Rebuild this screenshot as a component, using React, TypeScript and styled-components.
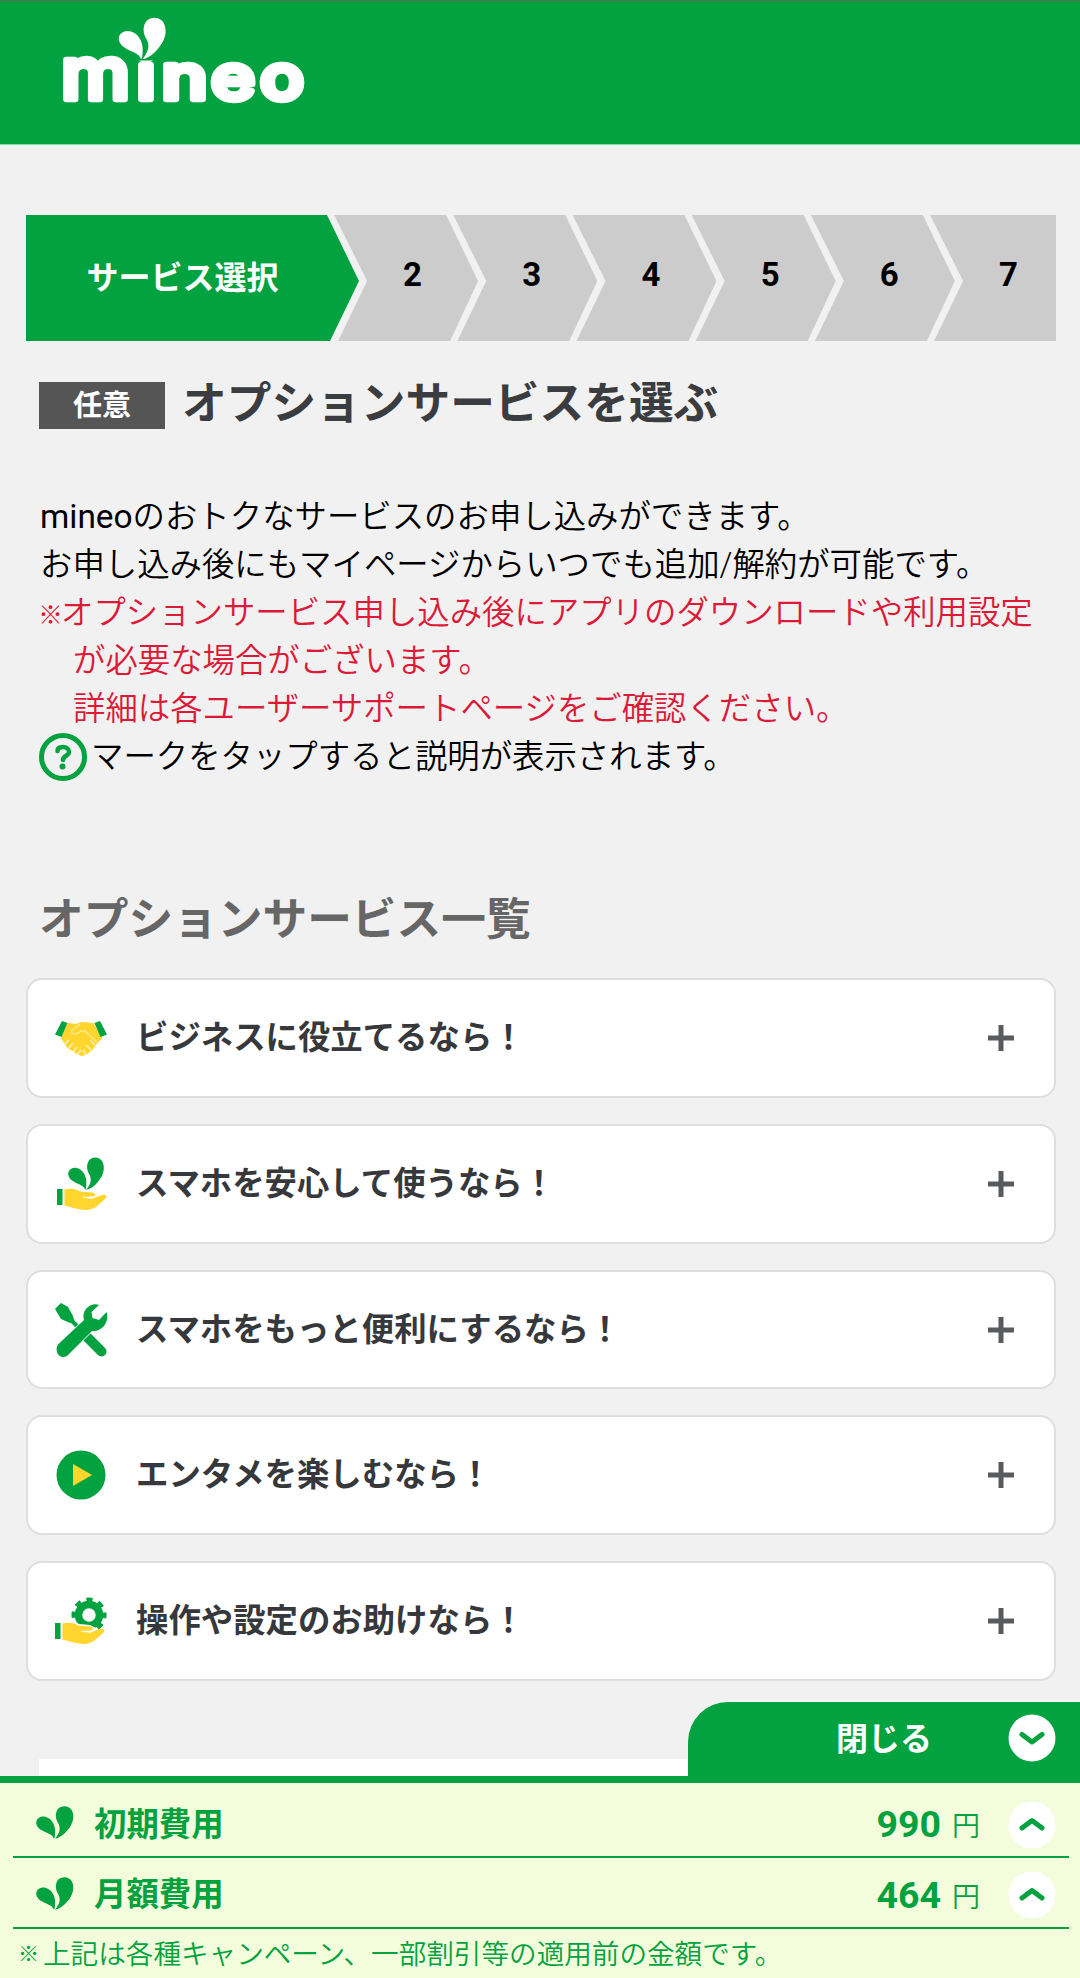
import React from "react";
import styled, { createGlobalStyle } from "styled-components";

const GREEN = "#02a240";
const YELLOW = "#ffd52e";

const GlobalStyle = createGlobalStyle`
  *, *::before, *::after { box-sizing: border-box; }
  body {
    margin: 0;
    background: #f1f1f1;
    font-family: Roboto, "Noto Sans CJK JP", sans-serif;
    color: #000;
  }
  h1, h2, p, ol, ul { margin: 0; padding: 0; }
  svg { display: block; flex: none; overflow: visible; }
`;

const Page = styled.div`
  position: relative;
  width: 1080px;
  height: 1978px;
  overflow: hidden;
  background: #f1f1f1;
`;

const Header = styled.header`
  height: 145px;
  padding: 13px 0 0 60px;
  background: ${GREEN};
  border-top: 1px solid #5f6a5f;
  border-bottom: 1px solid #7be0a4;
`;

const Main = styled.main`
  padding: 70px 24px 0 26px;
`;

const Steps = styled.ol`
  display: flex;
  height: 126px;
  list-style: none;
`;

const CurrentStep = styled.li`
  display: flex;
  align-items: center;
  justify-content: center;
  width: 333px;
  padding: 0 20px 6px 0;
  background: ${GREEN};
  color: #fff;
  font-size: 32px;
  font-weight: 700;
  clip-path: polygon(0 0, 301px 0, 333px 66px, 304px 100%, 0 100%);
`;

const Step = styled.li<{ $last?: boolean }>`
  display: flex;
  align-items: center;
  width: ${(p) => (p.$last ? 126 : 144)}px;
  margin-left: -24.8px;
  padding: 0 0 7px 69px;
  background: #ccc;
  font-size: 33px;
  font-weight: 700;
  clip-path: ${(p) =>
    p.$last
      ? "polygon(0 0, 100% 0, 100% 100%, 4px 100%, 33px 66px)"
      : "polygon(0 0, 112px 0, 144px 66px, 116px 100%, 4px 100%, 33px 66px)"};
`;

const TitleRow = styled.div`
  display: flex;
  align-items: center;
  gap: 17px;
  height: 50px;
  margin: 39px 0 0 13px;
`;

const Badge = styled.span`
  display: flex;
  align-items: center;
  justify-content: center;
  width: 126px;
  height: 47px;
  padding-top: 3px;
  background: #555;
  color: #fff;
  font-size: 29px;
  font-weight: 700;
  line-height: 1;
`;

const Title = styled.h1`
  margin-top: -2px;
  color: #3b3c40;
  font-size: 44.7px;
  line-height: 50px;
  font-weight: 700;
  white-space: nowrap;
`;

const Lead = styled.div`
  margin: 63px 0 0 14px;
  font-size: 32.4px;
  line-height: 48px;
  font-weight: 400;
  white-space: nowrap;
`;

const Line = styled.p<{ $alert?: boolean; $indent?: boolean }>`
  display: flex;
  align-items: center;
  height: 48px;
  padding-left: ${(p) => (p.$indent ? 33 : 0)}px;
  color: ${(p) => (p.$alert ? "#dc1a37" : "#000")};
  font-family: Roboto, "Noto Sans CJK JP DemiLight", "Noto Sans CJK JP", sans-serif;
  font-weight: 350;
`;

const Latin = styled.span`
  font-size: 33.4px;
  font-weight: 400;
`;

const Mark = styled.span<{ $w: number }>`
  display: inline-flex;
  justify-content: center;
  width: ${(p) => p.$w}px;
  font-family: "Noto Sans CJK JP", sans-serif;
  font-size: 0.76em;
  font-weight: 700;
`;

const HelpLine = styled(Line)`
  gap: 4px;
  margin-left: -1px;
`;

const SectionTitle = styled.h2`
  margin: 109px 0 0 13px;
  color: #666;
  font-size: 44.7px;
  line-height: 60px;
  font-weight: 700;
`;

const Cards = styled.ul`
  display: flex;
  flex-direction: column;
  gap: 26px;
  margin-top: 28.4px;
  list-style: none;
`;

const Card = styled.li`
  display: flex;
  align-items: center;
  height: 119.7px;
  padding: 0 40px 0 27px;
  border: 2px solid #dedede;
  border-radius: 16px;
  background: #fff;
`;

const CardLabel = styled.span`
  flex: 1;
  margin: -7px 0 0 29px;
  color: #36383b;
  font-size: 32.4px;
  font-weight: 700;
  white-space: nowrap;
`;

const NextPanel = styled.div`
  height: 100px;
  margin: 78px 14px 0 13px;
  background: #fff;
`;

const Dock = styled.footer`
  position: absolute;
  left: 0;
  right: 0;
  bottom: 0;
  height: 202px;
  padding: 0 11px 0 13px;
  border-top: 7px solid ${GREEN};
  background: #f3fddb;
  color: ${GREEN};
`;

const CloseTab = styled.div`
  position: absolute;
  right: 0;
  top: -81px;
  display: flex;
  align-items: center;
  justify-content: flex-end;
  gap: 76px;
  width: 392px;
  height: 81px;
  padding: 0 24px 9px 0;
  border-top-left-radius: 40px;
  background: ${GREEN};
  color: #fff;
`;

const CloseLabel = styled.span`
  margin-top: -4px;
  font-size: 32px;
  font-weight: 700;
`;

const FeeRow = styled.div<{ $h: number }>`
  display: flex;
  align-items: center;
  height: ${(p) => p.$h}px;
  padding: ${(p) => (p.$h > 72 ? "6px" : "1px")} 13px 0 23px;
  border-bottom: 2px solid ${GREEN};
`;

const FeeName = styled.span`
  flex: 1;
  margin: -3px 0 0 20px;
  font-size: 32.4px;
  font-weight: 700;
`;

const Amount = styled.span`
  margin-top: 3px;
  font-size: 37.5px;
  font-weight: 700;
`;

const Yen = styled.span`
  margin: 3px 28px 0 11px;
  font-size: 28px;
  font-family: "Noto Sans CJK JP DemiLight", "Noto Sans CJK JP", sans-serif;
  font-weight: 350;
`;

const Toggle = styled.span`
  margin-top: 4px;
`;

const Note = styled.p`
  display: flex;
  align-items: center;
  height: 46px;
  padding-left: 1px;
  font-family: "Noto Sans CJK JP DemiLight", "Noto Sans CJK JP", sans-serif;
  font-size: 27.6px;
  font-weight: 350;
  white-space: nowrap;
`;

const LEAF_LEFT =
  "M141 59C139 53 131 52 126 48.500C120 45 117.500 40 119.500 35.500C122 30.500 129 29.500 134.500 33C142 38 144 47 142 58Z";
const LEAF_RIGHT =
  "M142.500 59C149 51 149.500 46 147 40C142.500 34 142.500 25 147 20.500C152 16 160 17 163.500 22.500C168 31 165 40 159 47.500C154 54 148 58.500 142.500 59Z";

function Leaves({ width = 38, height = 33 }: { width?: number; height?: number }) {
  return (
    <svg width={width} height={height} viewBox="118.500 17.500 48 42" preserveAspectRatio="none" fill={GREEN}>
      <path d={LEAF_LEFT} />
      <path d={LEAF_RIGHT} />
    </svg>
  );
}

const LETTERS = [
  { c: "m", x: 61, w: 69, size: 72 },
  { c: "i", x: 136.5, w: 19, size: 62 },
  { c: "n", x: 161.5, w: 46, size: 62 },
  { c: "e", x: 211, w: 44, size: 62 },
  { c: "o", x: 260, w: 44, size: 62 },
];

function Logo() {
  return (
    <svg width="250" height="94" viewBox="60 14 250 94" fill="#fff" role="img" aria-label="mineo">
      <g
        fontFamily="Inter, sans-serif"
        fontWeight="500"
        stroke="#fff"
        strokeWidth="6.400"
        strokeLinejoin="round"
      >
        {LETTERS.map((l) => (
          <text key={l.c} x={l.x} y="98.500" fontSize={l.size} textLength={l.w} lengthAdjust="spacingAndGlyphs">
            {l.c}
          </text>
        ))}
      </g>
      <rect x="134" y="40" width="24" height="20.500" fill={GREEN} />
      <path d={LEAF_LEFT} />
      <path d={LEAF_RIGHT} />
    </svg>
  );
}

function HelpIcon() {
  return (
    <svg width="48" height="48" viewBox="0 0 48 48" fill="none" stroke={GREEN}>
      <circle cx="24" cy="24" r="21.500" strokeWidth="5" />
      <path d="M18.500 18C18.500 15 21 14 24 14C27.500 14 30 16 30 19C30 23 24 22.500 24 27" strokeWidth="4.500" strokeLinecap="round" />
      <circle cx="23.500" cy="33.500" r="3" fill={GREEN} stroke="none" />
    </svg>
  );
}

function RoundChevron({ up }: { up?: boolean }) {
  return (
    <svg width="48" height="48" viewBox="0 0 48 48">
      <circle cx="24" cy="24" r="23.500" fill="#fff" />
      <path
        d={up ? "M14 27L24 19.500L34 27" : "M14 20.500L24 28L34 20.500"}
        fill="none"
        stroke={GREEN}
        strokeWidth="5"
        strokeLinecap="round"
        strokeLinejoin="round"
      />
    </svg>
  );
}

function Plus() {
  return (
    <svg width="26" height="26" viewBox="0 0 26 26" stroke="#585a5e" strokeWidth="5">
      <path d="M13 0V26M0 13H26" />
    </svg>
  );
}

function Handshake() {
  return (
    <svg width="52" height="54" viewBox="0 0 52 54">
      <path
        d="M13.500 13L21 14L27 12L38 13L46 27L42 31L37 38L32 42L27 44L22 42L13 36L7 27Z"
        fill={YELLOW}
        stroke={YELLOW}
        strokeWidth="2"
        strokeLinejoin="round"
      />
      <path d="M25 13L16.500 20C16 24 21 24 26 20L30 20L42 31" fill="none" stroke="#ffeb94" strokeWidth="1.300" />
      <path d="M10 33L14 29M14 37L18 32M18 41L22 36M22 44L26 39M31 43L28 39M36 39L31 34M40 34L35 29" stroke="#fff6cc" strokeWidth="1.300" />
      <path d="M7 10L12.500 12L6.500 26L0 23.500ZM45 10L39.500 12L45.500 26L52 23.500Z" fill={GREEN} />
    </svg>
  );
}

function Palm() {
  return (
    <>
      <rect x="2" y="32" width="5.500" height="16" fill={GREEN} />
      <path
        d="M9.500 32.500C16 31 21 31.500 25 34.500L37 35.500C41 36 41 39 38 39.500L29 40L37 41.500L47 38C51 37 53 39 50 42L41 50C34 54.500 26 53 19 51L9.500 48.500Z"
        fill={YELLOW}
      />
      <path d="M28 40.300L37 41.300L41 39.500" fill="none" stroke="#fff" strokeWidth="1" />
    </>
  );
}

function LeafHand() {
  return (
    <svg width="52" height="54" viewBox="0 0 52 54">
      <g transform="translate(13 0) scale(.76 .78) translate(-118.500 -17)" fill={GREEN}>
        <path d={LEAF_LEFT} />
        <path d={LEAF_RIGHT} />
      </g>
      <Palm />
    </svg>
  );
}

function Tools() {
  return (
    <svg width="52" height="54" viewBox="0 0 52 54">
      <path d="M15 16L24 25" stroke={GREEN} strokeWidth="4" />
      <path d="M0 6L6 0L13 4L18 13L19 17L15 20L6 16Z" fill={GREEN} />
      <path d="M31 33L46.500 48.500" stroke={GREEN} strokeWidth="10" strokeLinecap="round" />
      <path
        d="M44 2C36 -1 26 7 29 17L3 41.500C-1 48 4 57 12 53L37 28C46 29 55 20 51.500 9L44 17L37.500 15L36.500 9Z"
        fill={GREEN}
        stroke="#fff"
        strokeWidth="1.500"
        paintOrder="stroke"
      />
    </svg>
  );
}

function Play() {
  return (
    <svg width="52" height="54" viewBox="0 0 52 54">
      <circle cx="26" cy="27" r="24.500" fill={GREEN} />
      <path d="M18 16L37 27L18 38Z" fill={YELLOW} />
    </svg>
  );
}

function GearHand() {
  return (
    <svg width="52" height="54" viewBox="0 0 52 54">
      <circle cx="34" cy="21" r="10.500" fill="none" stroke={GREEN} strokeWidth="7.500" />
      <circle cx="34" cy="21" r="15" fill="none" stroke={GREEN} strokeWidth="5" strokeDasharray="6 5.780" strokeDashoffset="3" />
      <g transform="translate(-2 -3)">
        <path d="M9 31C16 29.500 21 29.500 26 33L37 34L43 37V42H9Z" fill="#fff" />
        <Palm />
      </g>
    </svg>
  );
}

const SERVICES = [
  { label: "ビジネスに役立てるなら！", Icon: Handshake },
  { label: "スマホを安心して使うなら！", Icon: LeafHand },
  { label: "スマホをもっと便利にするなら！", Icon: Tools },
  { label: "エンタメを楽しむなら！", Icon: Play },
  { label: "操作や設定のお助けなら！", Icon: GearHand },
];

const FEES = [
  { name: "初期費用", amount: 990, h: 75 },
  { name: "月額費用", amount: 464, h: 71 },
];

export default function App() {
  return (
    <Page>
      <GlobalStyle />
      <Header>
        <Logo />
      </Header>
      <Main>
        <Steps>
          <CurrentStep>サービス選択</CurrentStep>
          {[2, 3, 4, 5, 6, 7].map((n) => (
            <Step key={n} $last={n === 7}>
              {n}
            </Step>
          ))}
        </Steps>
        <TitleRow>
          <Badge>任意</Badge>
          <Title>オプションサービスを選ぶ</Title>
        </TitleRow>
        <Lead>
          <Line>
            <Latin>mineo</Latin>のおトクなサービスのお申し込みができます。
          </Line>
          <Line>お申し込み後にもマイページからいつでも追加/解約が可能です。</Line>
          <Line $alert>
            <Mark $w={21}>※</Mark>オプションサービス申し込み後にアプリのダウンロードや利用設定
          </Line>
          <Line $alert $indent>
            が必要な場合がございます。
          </Line>
          <Line $alert $indent>
            詳細は各ユーザーサポートページをご確認ください。
          </Line>
          <HelpLine>
            <HelpIcon />
            マークをタップすると説明が表示されます。
          </HelpLine>
        </Lead>
        <SectionTitle>オプションサービス一覧</SectionTitle>
        <Cards>
          {SERVICES.map(({ label, Icon }) => (
            <Card key={label}>
              <Icon />
              <CardLabel>{label}</CardLabel>
              <Plus />
            </Card>
          ))}
        </Cards>
        <NextPanel />
      </Main>
      <Dock>
        <CloseTab>
          <CloseLabel>閉じる</CloseLabel>
          <RoundChevron />
        </CloseTab>
        {FEES.map((fee) => (
          <FeeRow key={fee.name} $h={fee.h}>
            <Leaves />
            <FeeName>{fee.name}</FeeName>
            <Amount>{fee.amount}</Amount>
            <Yen>円</Yen>
            <Toggle>
              <RoundChevron up />
            </Toggle>
          </FeeRow>
        ))}
        <Note>
          <Mark $w={29}>※</Mark>上記は各種キャンペーン、一部割引等の適用前の金額です。
        </Note>
      </Dock>
    </Page>
  );
}
